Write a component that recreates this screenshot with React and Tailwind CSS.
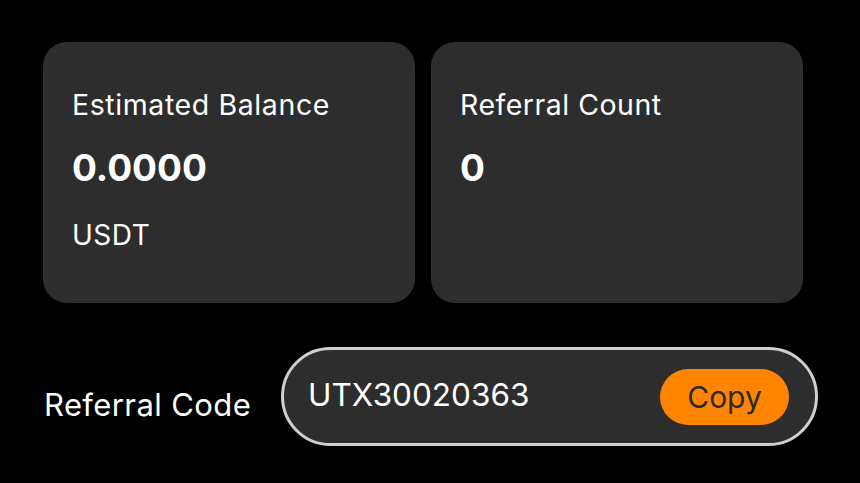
export default function App() {
  const font = { fontFamily: 'Inter, "Noto Sans", sans-serif' };
  return (
    <div className="w-[860px] h-[483px] bg-black text-white overflow-hidden" style={font}>
      <div className="pl-[43px] pt-[42px] w-[803px]">
        <div className="flex gap-4">
          <div className="w-[372px] h-[261px] rounded-[24px] bg-[#2d2d2d] pl-[29px] pt-[47px]">
            <div className="text-[28.5px] leading-[32px] tracking-[0.6px]">Estimated Balance</div>
            <div className="text-[37px] leading-[40px] font-bold mt-[27px]">0.0000</div>
            <div className="text-[28px] leading-[32px] tracking-[0.5px] mt-[31px]">USDT</div>
          </div>
          <div className="w-[372px] h-[261px] rounded-[24px] bg-[#2d2d2d] pl-[29px] pt-[47px]">
            <div className="text-[28.5px] leading-[32px] tracking-[0.5px]">Referral Count</div>
            <div className="text-[37px] leading-[40px] font-bold mt-[27px]">0</div>
          </div>
        </div>
      </div>
      <div className="flex items-start pl-[44px] mt-[44px]">
        <div className="text-[31px] leading-[36px] tracking-[0.4px] w-[237px] mt-[40px]">Referral Code</div>
        <div className="w-[537px] h-[99px] rounded-full border-[3px] border-[#cfcfcf] bg-[#2d2d2d] flex items-center justify-between pl-[24px] pr-[26px]">
          <div className="text-[31.5px] leading-[36px] pb-[3px]">UTX30020363</div>
          <div className="w-[129px] h-[56px] rounded-full bg-[#ff8500] flex items-center justify-center text-[30px] leading-[36px] text-[#2a2a2a]">Copy</div>
        </div>
      </div>
    </div>
  );
}
